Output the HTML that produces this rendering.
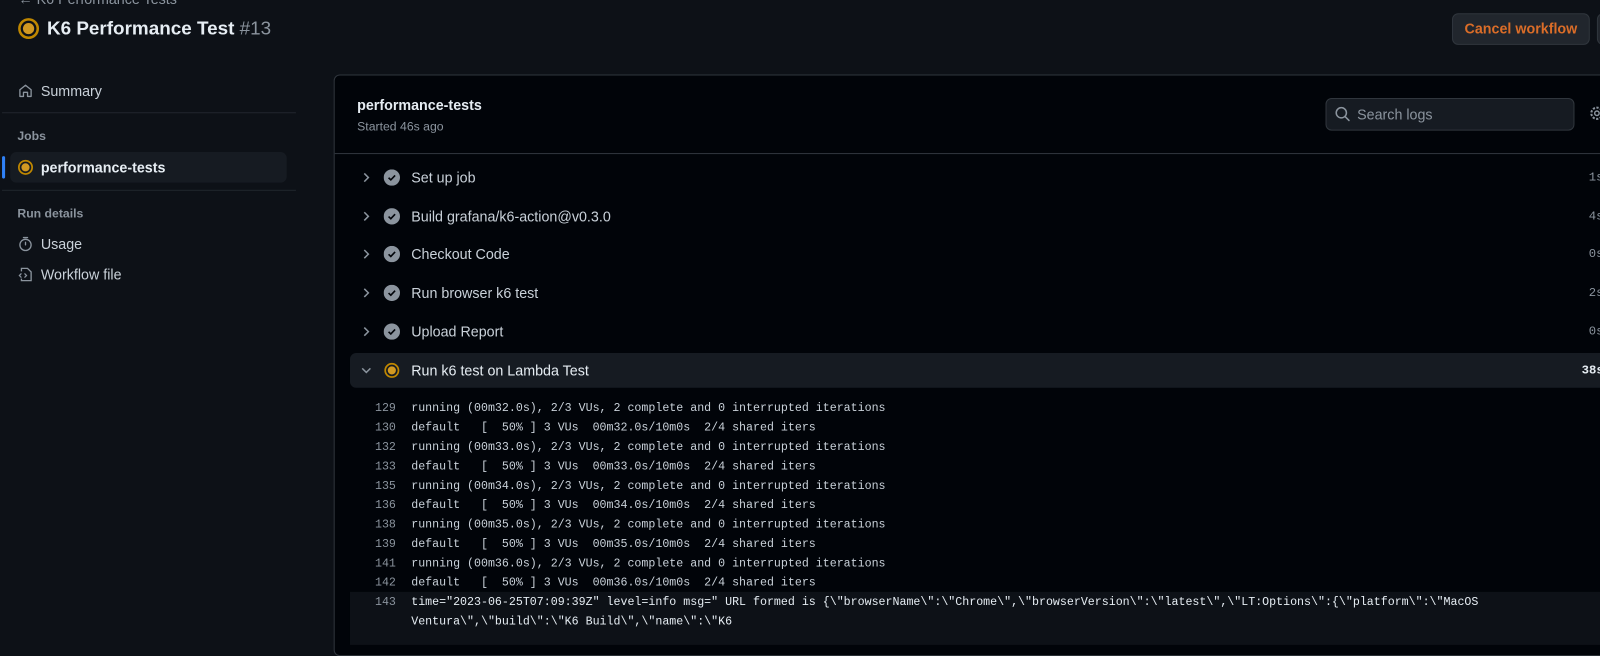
<!DOCTYPE html>
<html><head><style>
*{margin:0;padding:0;box-sizing:border-box}
html,body{width:1600px;height:630px;overflow:hidden;background:#0d1117}
#w{position:absolute;left:0;top:0;width:1568px;height:618px;transform:scale(1.0204);transform-origin:0 0;font-family:"Liberation Sans",sans-serif;color:#e6edf3}
.abs{position:absolute}
.mono{font-family:"Liberation Mono",monospace;font-size:11.4px;white-space:pre;color:#c9d1d9}
.ln{position:absolute;left:343px;width:45px;text-align:right;color:#8b949e}
.lt{position:absolute;left:403px}
.step{position:absolute;left:343px;width:1257px;height:34px}
.step .chev{position:absolute;left:10px;top:10px}
.step .ic{position:absolute;left:33px;top:9px}
.step .t{position:absolute;left:60px;top:9px;font-size:14px;color:#c9d1d9}
.step .d{position:absolute;left:1214px;top:10px;font-family:"Liberation Mono",monospace;font-size:12px;color:#8b949e}
</style></head><body><div id="w">
<div class="abs" style="left:18px;top:-9px;font-size:14px;color:#8b949e">← K6 Performance Tests</div>
<svg class="abs" style="left:17px;top:17px" width="22" height="22" viewBox="0 0 22 22"><circle cx="11" cy="11" r="9" fill="none" stroke="#bf8700" stroke-width="2.5"/><circle cx="11" cy="11" r="5.5" fill="#d29922"/></svg>
<div class="abs" style="left:46px;top:17px;font-size:18.5px;font-weight:bold;color:#e6edf3">K6 Performance Test <span style="font-weight:normal;color:#8b949e">#13</span></div>
<div class="abs" style="left:1423px;top:13px;width:135px;height:31px;border:1px solid #30363d;border-radius:6px;background:#21262d;color:#db6d28;font-size:14px;font-weight:bold;text-align:center;line-height:29px">Cancel workflow</div>
<div class="abs" style="left:1565px;top:13px;width:40px;height:31px;border:1px solid #30363d;border-radius:6px;background:#21262d"></div>

<svg class="abs" style="left:17px;top:81px" width="16" height="16" viewBox="0 0 16 16"><path d="M2.5 7 8 2.5 13.5 7v6.5h-3.5v-4h-4v4H2.5z" fill="none" stroke="#8b949e" stroke-width="1.3" stroke-linejoin="round"/></svg>
<div class="abs" style="left:40px;top:81px;font-size:14px;color:#c9d1d9">Summary</div>
<div class="abs" style="left:2px;top:110px;width:288px;height:1px;background:#21262d"></div>
<div class="abs" style="left:17px;top:126px;font-size:12px;font-weight:bold;color:#8b949e">Jobs</div>
<div class="abs" style="left:10px;top:149px;width:271px;height:30px;border-radius:6px;background:#161b22"></div>
<div class="abs" style="left:2px;top:153px;width:3px;height:22px;border-radius:2px;background:#2f81f7"></div>
<svg class="abs" style="left:17px;top:156px" width="16" height="16" viewBox="0 0 16 16"><circle cx="8" cy="8" r="6.5" fill="none" stroke="#bf8700" stroke-width="1.7"/><circle cx="8" cy="8" r="4" fill="#d29922"/></svg>
<div class="abs" style="left:40px;top:156px;font-size:14px;font-weight:bold;color:#e6edf3">performance-tests</div>
<div class="abs" style="left:2px;top:186px;width:288px;height:1px;background:#21262d"></div>
<div class="abs" style="left:17px;top:202px;font-size:12px;font-weight:bold;color:#8b949e">Run details</div>
<svg class="abs" style="left:17px;top:231px" width="16" height="16" viewBox="0 0 16 16"><circle cx="8" cy="9" r="5.5" fill="none" stroke="#8b949e" stroke-width="1.3"/><path d="M6 1.8h4M8 9V6.5" stroke="#8b949e" stroke-width="1.3" stroke-linecap="round"/></svg>
<div class="abs" style="left:40px;top:231px;font-size:14px;color:#c9d1d9">Usage</div>
<svg class="abs" style="left:17px;top:261px" width="16" height="16" viewBox="0 0 16 16"><path d="M4 5V2h6l3.5 3.5V14H4v-2" fill="none" stroke="#8b949e" stroke-width="1.3"/><path d="M4 7 2 9l2 2M7 7l2 2-2 2" fill="none" stroke="#8b949e" stroke-width="1.2"/></svg>
<div class="abs" style="left:40px;top:261px;font-size:14px;color:#c9d1d9">Workflow file</div>

<div class="abs" style="left:327px;top:73px;width:1300px;height:570px;background:#010409;border:1px solid #30363d;border-radius:6px"></div>
<div class="abs" style="left:328px;top:150px;width:1272px;height:1px;background:#30363d"></div>
<div class="abs" style="left:350px;top:95px;font-size:14px;font-weight:bold;color:#e6edf3">performance-tests</div>
<div class="abs" style="left:350px;top:117px;font-size:12px;color:#8b949e">Started 46s ago</div>
<div class="abs" style="left:1299px;top:96px;width:244px;height:32px;border:1px solid #30363d;border-radius:6px;background:#161b22"></div>
<svg class="abs" style="left:1308px;top:104px" width="16" height="16" viewBox="0 0 16 16"><circle cx="6.5" cy="6.5" r="5" fill="none" stroke="#8b949e" stroke-width="1.5"/><path d="M10.2 10.2 14 14" stroke="#8b949e" stroke-width="1.5" stroke-linecap="round"/></svg>
<div class="abs" style="left:1330px;top:104px;font-size:14px;color:#8b949e">Search logs</div>
<svg class="abs" style="left:1557px;top:103px" width="16" height="16" viewBox="0 0 16 16"><circle cx="8" cy="8" r="5.5" fill="none" stroke="#8b949e" stroke-width="2" stroke-dasharray="2.2 1.4"/><circle cx="8" cy="8" r="2.2" fill="none" stroke="#8b949e" stroke-width="1.4"/></svg>

<div class="step" style="top:157px"><svg class="chev" width="12" height="14" viewBox="0 0 12 14"><path d="M4 3l4 4-4 4" fill="none" stroke="#8b949e" stroke-width="1.5"/></svg><svg class="ic" width="16" height="16" viewBox="0 0 16 16"><circle cx="8" cy="8" r="8" fill="#8b949e"/><path d="M4.8 8.2l2.2 2.1 4.2-4.4" fill="none" stroke="#010409" stroke-width="1.6"/></svg><div class="t">Set up job</div><div class="d">1s</div></div>
<div class="step" style="top:195px"><svg class="chev" width="12" height="14" viewBox="0 0 12 14"><path d="M4 3l4 4-4 4" fill="none" stroke="#8b949e" stroke-width="1.5"/></svg><svg class="ic" width="16" height="16" viewBox="0 0 16 16"><circle cx="8" cy="8" r="8" fill="#8b949e"/><path d="M4.8 8.2l2.2 2.1 4.2-4.4" fill="none" stroke="#010409" stroke-width="1.6"/></svg><div class="t">Build grafana/k6-action@v0.3.0</div><div class="d">4s</div></div>
<div class="step" style="top:232px"><svg class="chev" width="12" height="14" viewBox="0 0 12 14"><path d="M4 3l4 4-4 4" fill="none" stroke="#8b949e" stroke-width="1.5"/></svg><svg class="ic" width="16" height="16" viewBox="0 0 16 16"><circle cx="8" cy="8" r="8" fill="#8b949e"/><path d="M4.8 8.2l2.2 2.1 4.2-4.4" fill="none" stroke="#010409" stroke-width="1.6"/></svg><div class="t">Checkout Code</div><div class="d">0s</div></div>
<div class="step" style="top:270px"><svg class="chev" width="12" height="14" viewBox="0 0 12 14"><path d="M4 3l4 4-4 4" fill="none" stroke="#8b949e" stroke-width="1.5"/></svg><svg class="ic" width="16" height="16" viewBox="0 0 16 16"><circle cx="8" cy="8" r="8" fill="#8b949e"/><path d="M4.8 8.2l2.2 2.1 4.2-4.4" fill="none" stroke="#010409" stroke-width="1.6"/></svg><div class="t">Run browser k6 test</div><div class="d">2s</div></div>
<div class="step" style="top:308px"><svg class="chev" width="12" height="14" viewBox="0 0 12 14"><path d="M4 3l4 4-4 4" fill="none" stroke="#8b949e" stroke-width="1.5"/></svg><svg class="ic" width="16" height="16" viewBox="0 0 16 16"><circle cx="8" cy="8" r="8" fill="#8b949e"/><path d="M4.8 8.2l2.2 2.1 4.2-4.4" fill="none" stroke="#010409" stroke-width="1.6"/></svg><div class="t">Upload Report</div><div class="d">0s</div></div>
<div class="step" style="top:346px;background:#161b22;border-radius:6px 0 0 6px"><svg class="chev" width="12" height="14" viewBox="0 0 12 14"><path d="M2 5l4 4 4-4" fill="none" stroke="#8b949e" stroke-width="1.5"/></svg><svg class="ic" width="16" height="16" viewBox="0 0 16 16"><circle cx="8" cy="8" r="6.5" fill="none" stroke="#bf8700" stroke-width="1.7"/><circle cx="8" cy="8" r="4" fill="#d29922"/></svg><div class="t" style="color:#e6edf3">Run k6 test on Lambda Test</div><div class="d" style="left:1207px;color:#e6edf3;font-weight:bold">38s</div></div>

<div class="mono">
<div class="ln" style="top:395px">129</div><div class="lt" style="top:395px">running (00m32.0s), 2/3 VUs, 2 complete and 0 interrupted iterations</div>
<div class="ln" style="top:414px">130</div><div class="lt" style="top:414px">default   [  50% ] 3 VUs  00m32.0s/10m0s  2/4 shared iters</div>
<div class="ln" style="top:433px">132</div><div class="lt" style="top:433px">running (00m33.0s), 2/3 VUs, 2 complete and 0 interrupted iterations</div>
<div class="ln" style="top:452px">133</div><div class="lt" style="top:452px">default   [  50% ] 3 VUs  00m33.0s/10m0s  2/4 shared iters</div>
<div class="ln" style="top:471px">135</div><div class="lt" style="top:471px">running (00m34.0s), 2/3 VUs, 2 complete and 0 interrupted iterations</div>
<div class="ln" style="top:490px">136</div><div class="lt" style="top:490px">default   [  50% ] 3 VUs  00m34.0s/10m0s  2/4 shared iters</div>
<div class="ln" style="top:509px">138</div><div class="lt" style="top:509px">running (00m35.0s), 2/3 VUs, 2 complete and 0 interrupted iterations</div>
<div class="ln" style="top:528px">139</div><div class="lt" style="top:528px">default   [  50% ] 3 VUs  00m35.0s/10m0s  2/4 shared iters</div>
<div class="ln" style="top:547px">141</div><div class="lt" style="top:547px">running (00m36.0s), 2/3 VUs, 2 complete and 0 interrupted iterations</div>
<div class="ln" style="top:566px">142</div><div class="lt" style="top:566px">default   [  50% ] 3 VUs  00m36.0s/10m0s  2/4 shared iters</div>
<div class="abs" style="left:343px;top:580px;width:1257px;height:52px;background:#0d1117"></div>
<div class="ln" style="top:585px">143</div><div class="lt" style="top:585px;color:#e6edf3">time="2023-06-25T07:09:39Z" level=info msg=" URL formed is {\"browserName\":\"Chrome\",\"browserVersion\":\"latest\",\"LT:Options\":{\"platform\":\"MacOS</div>
<div class="lt" style="top:604px;color:#e6edf3">Ventura\",\"build\":\"K6 Build\",\"name\":\"K6</div>
</div>
</div></body></html>
